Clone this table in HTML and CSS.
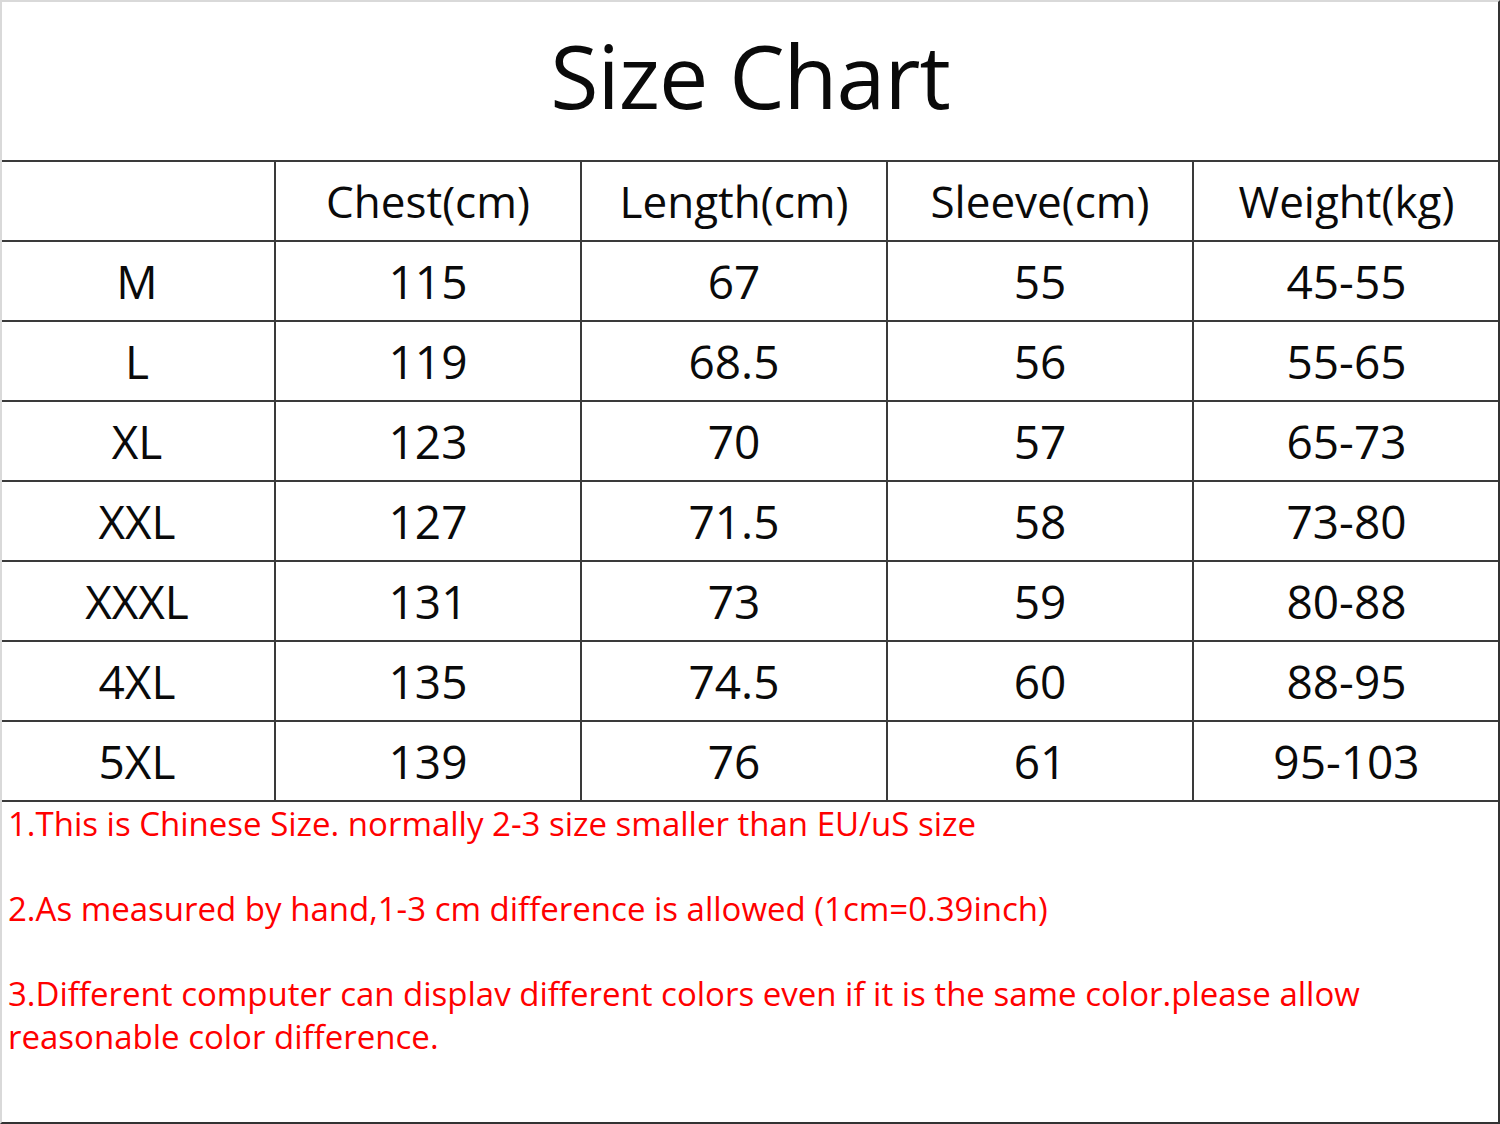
FILE: index.html
```html
<!DOCTYPE html>
<html>
<head>
<meta charset="utf-8">
<link rel="stylesheet" href="styles.css">
</head>
<body>
<div class="sheet">
  <h1 class="title">Size Chart</h1>
  <table class="chart">
    <colgroup>
      <col class="c-size"><col class="c-val"><col class="c-val"><col class="c-val"><col class="c-val">
    </colgroup>
    <thead>
      <tr><th class="first"></th><th>Chest(cm)</th><th>Length(cm)</th><th>Sleeve(cm)</th><th>Weight(kg)</th></tr>
    </thead>
    <tbody>
      <tr><td class="first">M</td><td>115</td><td>67</td><td>55</td><td>45-55</td></tr>
      <tr><td class="first">L</td><td>119</td><td>68.5</td><td>56</td><td>55-65</td></tr>
      <tr><td class="first">XL</td><td>123</td><td>70</td><td>57</td><td>65-73</td></tr>
      <tr><td class="first">XXL</td><td>127</td><td>71.5</td><td>58</td><td>73-80</td></tr>
      <tr><td class="first">XXXL</td><td>131</td><td>73</td><td>59</td><td>80-88</td></tr>
      <tr><td class="first">4XL</td><td>135</td><td>74.5</td><td>60</td><td>88-95</td></tr>
      <tr><td class="first">5XL</td><td>139</td><td>76</td><td>61</td><td>95-103</td></tr>
    </tbody>
  </table>
  <div class="notes">
    <p>1.This is Chinese Size. normally 2-3 size smaller than EU/uS size</p>
    <p>2.As measured by hand,1-3 cm difference is allowed (1cm=0.39inch)</p>
    <p>3.Different computer can displav different colors even if it is the same color.please allow reasonable color difference.</p>
  </div>
</div>
</body>
</html>
```

FILE: styles.css
```css
html, body {
  margin: 0;
  padding: 0;
  background: #ffffff;
}
.sheet {
  box-sizing: border-box;
  width: 1500px;
  height: 1124px;
  border-left: 2px solid #d9d9d9;
  border-top: 2px solid #d9d9d9;
  border-right: 2px solid #333333;
  border-bottom: 2px solid #333333;
  font-family: "Open Sans", "Noto Sans", sans-serif;
  color: #0a0a0a;
  overflow: hidden;
}
.title {
  margin: 0;
  height: 158px;
  box-sizing: border-box;
  padding-top: 13px;
  text-align: center;
  font-weight: 400;
  font-size: 88px;
  line-height: 120px;
  letter-spacing: -1px;
}
.chart {
  width: 1498px;
  margin-left: -2px;
  border-collapse: collapse;
  table-layout: fixed;
}
.c-size { width: 275px; }
.c-val { width: 306px; }
.chart th, .chart td {
  height: 78px;
  padding: 0;
  border: 2px solid #3a3a3a;
  text-align: center;
  vertical-align: middle;
  font-weight: 400;
  font-size: 46px;
  line-height: 60px;
}
.chart th {
  font-size: 44px;
}
.chart .first {
  border-left: none;
}
.chart tr > :last-child {
  border-right: none;
}
.notes {
  padding: 0 0 0 6px;
  color: #ff0000;
  font-size: 33px;
  line-height: 43px;
}
.notes p {
  margin: 0 0 42px 0;
}
```
